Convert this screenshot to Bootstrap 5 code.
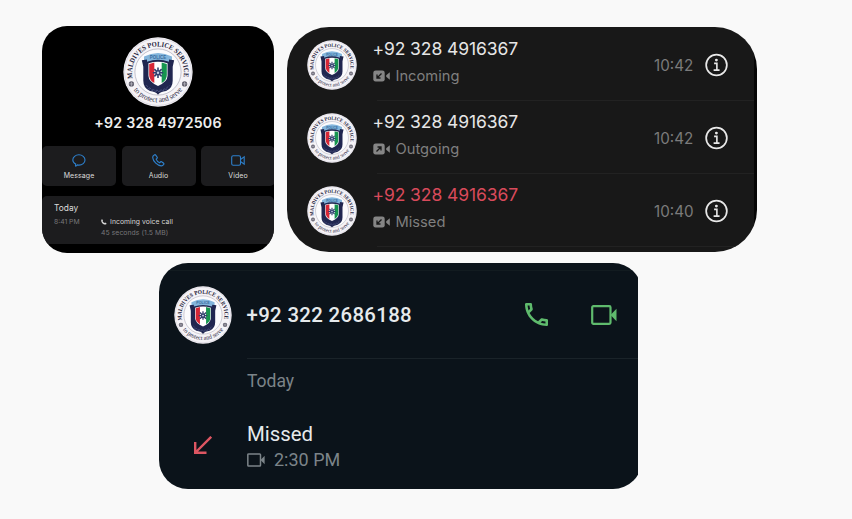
<!DOCTYPE html>
<html lang="en">
<head>
<meta charset="utf-8">
<meta name="viewport" content="width=device-width, initial-scale=1">
<title>Call logs</title>
<link href="https://cdn.jsdelivr.net/npm/bootstrap@5.3.0/dist/css/bootstrap.min.css" rel="stylesheet">
<style>
body{background:#f9f9f9;font-family:Inter,"Liberation Sans",sans-serif;width:852px;height:519px;overflow:hidden;white-space:nowrap}
svg{display:block;flex:none}
.stage{padding:25.5px 0 0 42px}
.phone-a{width:232px;height:227.5px;background:#000;border-radius:25px;overflow:hidden;color:#eee;padding-top:11px}
.phone-a .num{font-size:14.2px;font-weight:600;line-height:18px;letter-spacing:.22px;margin-top:7.2px;height:32.3px}
.tiles{gap:5.5px;height:40px}
.tile{background:#1c1c1e;border-radius:5px;font-size:7px;line-height:9px;color:#dcdcdc;padding-top:8px;flex:0 0 74px}
.tile span{margin-top:4px;letter-spacing:.08px}
.log{background:#1c1c1e;border-radius:5px;height:48px;margin-top:10px;padding:7px 0 0 12px;font-size:6.8px}
.log .day{font-size:8.4px;line-height:10px;color:#dcdcdc}
.log .when{width:47px;color:#77777a;line-height:10px}
.dim{color:#77777a;line-height:11.5px;letter-spacing:.08px}
.voice{line-height:10px;color:#d5d5d5;gap:3px;letter-spacing:.06px}
.phone-b{width:470px;height:225px;margin:1.5px 0 0 13px;padding:1px 3px 0 0;background:linear-gradient(to left,#060606 3px,#181818 3px);border-radius:42px;overflow:hidden}
.call{height:73px;padding-left:20px}
.call .main{margin:-6.5px 0 0 15.5px;width:281.5px}
.call .num{font-size:17.5px;line-height:22px;color:#e6e6e6;letter-spacing:-.1px}
.call.missed .num{color:#d84a5b}
.call .kind{font-size:14.7px;line-height:18px;color:#7f7f7f;margin-top:7.5px;gap:5px}
.call .time{font-size:15.2px;color:#7b7b7b;width:51px;padding-top:3px}
.rule{height:1px;background:#222;margin:-1px 0 0 90px}
.clip{width:479px;height:226px;margin:10px 0 0 117px;overflow:hidden;font-family:Roboto,sans-serif}
.phone-c{width:483px;height:226px;background:#0b131a;border-radius:29px;overflow:hidden}
.phone-c .top-line{height:7.5px;border-bottom:1px solid #121b20}
.phone-c .head{height:87px;padding:1.5px 0 0 14.5px}
.phone-c .num{font-size:20.4px;font-weight:500;letter-spacing:.33px;color:#e6eaec;margin-left:15px;width:278px;padding-top:2px}
.phone-c .video{color:#5fbb6d;margin-left:43.5px}
.line-c{height:1.5px;background:#1a2329;margin-left:88px}
.phone-c .day{font-size:17.5px;line-height:22px;color:#7c8489;margin:11px 0 0 88px}
.phone-c .entry{margin-top:29.5px;padding-left:35px}
.phone-c .entry-arrow{margin-top:-2px}
.phone-c .entry-text{margin-left:35px}
.phone-c .state{font-size:20.4px;line-height:24px;color:#e6eaec}
.phone-c .at{font-size:18px;line-height:22px;color:#7c8489;gap:9px;margin-top:3.5px}
</style>
</head>
<body>
<svg width="0" height="0" class="position-absolute" aria-hidden="true">
<defs>
<path id="arcTopText" d="M14.500 61A37 37 0 1 1 85.500 61"/>
<path id="arcLowText" d="M14 74A43.300 43.300 0 0 0 86 74"/>
<symbol id="seal" viewBox="0 0 100 100">
<circle cx="50" cy="50" r="49.500" fill="#f5f3f7"/>
<circle cx="50" cy="50" r="47.800" fill="none" stroke="#cfcbd8" stroke-width=".8"/>
<circle cx="50" cy="50" r="33" fill="#fbfbfd" stroke="#9b99a8" stroke-width=".8"/>
<g font-family="Liberation Serif,serif" fill="#25233b">
<text font-size="10.200" font-weight="700"><textPath href="#arcTopText" startOffset="2" textLength="131" lengthAdjust="spacingAndGlyphs">MALDIVES POLICE SERVICE</textPath></text>
<text font-size="11"><textPath href="#arcLowText" startOffset="2" textLength="81" lengthAdjust="spacingAndGlyphs">to protect and serve</textPath></text>
</g>
<g fill="#5d5b69"><circle cx="12" cy="67" r="3.800"/><circle cx="88" cy="67" r="3.800"/></g>
<g fill="none" stroke="#c9c7d0" stroke-width=".9"><path d="M9 67h6M12 64v6M85 67h6M88 64v6"/></g>
<g transform="translate(-2.500 -.4) scale(1.050)">
<path d="M31 27Q50 17 69 27V35H31Z" fill="#83b5dc"/>
<text x="50" y="30" text-anchor="middle" font-size="6" font-weight="700" font-family="Liberation Sans,sans-serif" fill="#396c9c">POLICE</text>
<path d="M28 32l7-1v3q15-5 30 0v-3l7 1-2 9v19q0 10-9 14-8 1-11 5-3-4-11-5-9-4-9-14V41Z" fill="#202650"/>
<path d="M34 66q7 7 16 7t16-7M36 70q14 9 28 0" stroke="#59628f" stroke-width="1" fill="none" stroke-dasharray="3 2"/>
<path d="M37 36q13-4 26 0v17q0 8-13 14-13-6-13-14Z" fill="#fff"/>
<path d="M38 37l7-2v28q-7-4-7-11Z" fill="#d72636"/>
<path d="M55 35l7 2v15q0 7-7 11Z" fill="#16954f"/>
<path d="M50 42v14M43 49h14M45 44l10 10M55 44l-10 10" stroke="#32406e" stroke-width="2.200"/>
<circle cx="50" cy="49" r="3.500" fill="#32406e"/>
<circle cx="50" cy="49" r="1.600" fill="#c9d3e8"/>
</g>
</symbol>
<symbol id="info" viewBox="0 0 24 24"><circle cx="12" cy="12" r="10.800" fill="none" stroke="#e8e8e8" stroke-width="1.800"/><circle cx="11.900" cy="6.900" r="1.500" fill="#e8e8e8"/><path d="M9.500 10.300h2.900v6.900M9 17.400h6.200" fill="none" stroke="#e8e8e8" stroke-width="1.700"/></symbol>
<symbol id="camIn" viewBox="0 0 18 12"><rect x=".3" y=".4" width="11.400" height="11.200" rx="2.300" fill="#858585"/><path d="M13.200 5.200L16.800 2.300v7.400L13.200 6.800Z" fill="#858585"/><path d="M8.500 3.500L4 8M4 4.500V8h3.500" fill="none" stroke="#181818" stroke-width="1.300"/></symbol>
<symbol id="camOut" viewBox="0 0 18 12"><rect x=".3" y=".4" width="11.400" height="11.200" rx="2.300" fill="#858585"/><path d="M13.200 5.200L16.800 2.300v7.400L13.200 6.800Z" fill="#858585"/><path d="M3.500 8.500L8 4M4.500 4H8v3.500" fill="none" stroke="#181818" stroke-width="1.300"/></symbol>
<symbol id="cam" viewBox="0 0 26 20"><rect x="1.200" y="1.200" width="18.300" height="17.600" rx="1.200" fill="none" stroke="currentColor" stroke-width="2.200"/><path d="M19.500 10L25.500 3.800v12.400Z" fill="currentColor"/></symbol>
</defs>
</svg>

<main class="stage">
<div class="d-flex align-items-start">
<section class="phone-a">
<svg class="mx-auto" width="70" height="70"><use href="#seal"/></svg>
<div class="num text-center">+92 328 4972506</div>
<div class="tiles d-flex">
<div class="tile d-flex flex-column align-items-center"><svg width="14" height="13" viewBox="0 0 14 13" fill="none" stroke="#2d7fcb" stroke-width="1.100"><path d="M3.500 12.100q-.3-.2.200-2C2 9.200.8 7.700.8 6 .8 3.100 3.500.8 6.900.8S13 3.100 13 6s-2.700 5.100-6.100 5.100q-.8 0-1.500-.2-.9 1.100-1.900 1.200Z"/></svg><span>Message</span></div>
<div class="tile d-flex flex-column align-items-center"><svg width="13" height="13" viewBox="0 0 12 12" fill="none" stroke="#2d7fcb" stroke-width="1.100"><path d="M1.300 1.500l1.200-.8q.5-.2.900.3l1.400 2q.3.600-.2 1l-.8.700c.4 1.200 2 2.800 3.300 3.400l.8-.9q.5-.4 1 0l1.900 1.400q.4.400.1.900-1 1.600-2.400 1.500C5.200 10.800 1 7 .7 3.400Q.6 2.300 1.300 1.500Z"/></svg><span>Audio</span></div>
<div class="tile d-flex flex-column align-items-center"><svg width="14" height="13" viewBox="0 0 14 13" fill="none" stroke="#2d7fcb" stroke-width="1.100"><rect x=".7" y="1.800" width="8.800" height="9.400" rx="1.500"/><path d="M9.900 5.300l3.300-2.500v7.400L9.900 7.700"/></svg><span>Video</span></div>
</div>
<div class="log">
<div class="day">Today</div>
<div class="d-flex mt-1">
<div class="when">8:41 PM</div>
<div>
<div class="d-flex align-items-center voice"><svg width="6" height="6" viewBox="0 0 6 6"><path d="M.2 1Q.6.100 1.200.200L2 1.500l-.4.700q.6 1.200 1.900 1.800l.7-.5 1.400.9q-.1 1-1 1.200C2.200 5.800 0 3.300.2 1Z" fill="#d5d5d5"/></svg>Incoming voice call</div>
<div class="dim">45 seconds (1.5 MB)</div>
</div>
</div>
</div>
</section>

<section class="phone-b">
<div class="call d-flex align-items-center"><svg width="50" height="50"><use href="#seal"/></svg>
<div class="main"><div class="num">+92 328 4916367</div><div class="kind d-flex align-items-center"><svg width="18" height="12"><use href="#camIn"/></svg>Incoming</div></div>
<div class="time">10:42</div><svg width="23" height="24"><use href="#info"/></svg></div>
<div class="rule"></div>
<div class="call d-flex align-items-center"><svg width="50" height="50"><use href="#seal"/></svg>
<div class="main"><div class="num">+92 328 4916367</div><div class="kind d-flex align-items-center"><svg width="18" height="12"><use href="#camOut"/></svg>Outgoing</div></div>
<div class="time">10:42</div><svg width="23" height="24"><use href="#info"/></svg></div>
<div class="rule"></div>
<div class="call missed d-flex align-items-center"><svg width="50" height="50"><use href="#seal"/></svg>
<div class="main"><div class="num">+92 328 4916367</div><div class="kind d-flex align-items-center"><svg width="18" height="12"><use href="#camIn"/></svg>Missed</div></div>
<div class="time">10:40</div><svg width="23" height="24"><use href="#info"/></svg></div>
<div class="rule"></div>
</section>
</div>

<div class="clip">
<section class="phone-c">
<div class="top-line"></div>
<div class="head d-flex align-items-center"><svg width="58" height="58"><use href="#seal"/></svg>
<div class="num">+92 322 2686188</div>
<svg width="23" height="23" viewBox="3 3 18 18" fill="#5fbb6d"><path d="M6.540 5c.06.890.210 1.760.450 2.590l-1.200 1.200c-.41-1.200-.67-2.470-.76-3.790h1.510m9.860 12.020c.85.240 1.720.390 2.600.450v1.490c-1.320-.09-2.590-.35-3.800-.75l1.200-1.190M7.500 3H4c-.55 0-1 .45-1 1 0 9.390 7.610 17 17 17 .55 0 1-.45 1-1v-3.490c0-.55-.45-1-1-1-1.240 0-2.450-.2-3.570-.57-.1-.04-.21-.05-.31-.05-.26 0-.51.100-.71.290l-2.200 2.200c-2.830-1.450-5.150-3.760-6.590-6.590l2.200-2.200c.28-.28.360-.67.250-1.020C8.700 6.450 8.500 5.250 8.500 4c0-.55-.45-1-1-1z"/></svg>
<svg class="video" width="26" height="20"><use href="#cam"/></svg></div>
<div class="line-c"></div>
<div class="day">Today</div>
<div class="entry d-flex align-items-center">
<svg class="entry-arrow" width="18" height="18" viewBox="0 0 18 18" fill="none" stroke="#dd5662" stroke-width="2.400"><path d="M17.200.8L1.500 16.500M1.200 6v10.800H12.500"/></svg>
<div class="entry-text"><div class="state">Missed</div><div class="at d-flex align-items-center"><svg width="18" height="14"><use href="#cam"/></svg>2:30 PM</div></div>
</div>
</section>
</div>
</main>
</body>
</html>
